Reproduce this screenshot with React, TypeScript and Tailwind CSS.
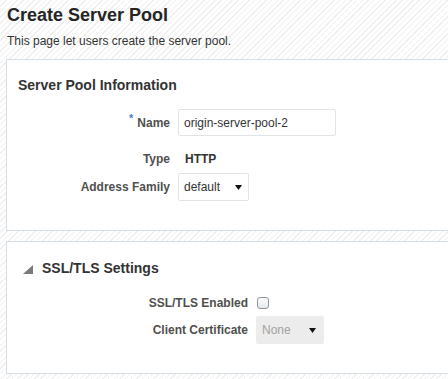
import React from "react";

function Caret() {
  return (
    <svg width="7" height="5" viewBox="0 0 7 5" className="block">
      <path d="M0 0 H7 L3.5 5 Z" fill="#111" />
    </svg>
  );
}

export default function App() {
  return (
    <div
      className="w-[448px] h-[379px] overflow-hidden text-[12px] text-[#333] bg-[repeating-linear-gradient(135deg,#efefef_0px,#efefef_1px,#ffffff_1px,#ffffff_4px)]"
      style={{ fontFamily: '"Liberation Sans", Arial, sans-serif' }}
    >
      <div className="pl-[7px] pt-[5px]">
        <h1 className="text-[18px] leading-[21px] font-bold text-[#252525]">Create Server Pool</h1>
        <p className="mt-[8px] text-[12px] leading-[14px] text-[#333]">This page let users create the server pool.</p>
      </div>

      <div className="ml-[6px] mt-[11px] w-[460px] border border-[#d6dfe6] bg-white pt-[17px] pb-[29px]">
        <h2 className="pl-[11px] text-[14px] leading-[17px] font-bold text-[#333]">Server Pool Information</h2>
        <div className="mt-[15px] grid grid-cols-[163px_auto] gap-x-[8px] items-center">
          <div className="flex justify-end items-center font-bold text-[#4f4f4f]">
            <span className="text-[#4a7ab7] text-[11px] mr-[4px] relative top-[-4px]">*</span>
            <span>Name</span>
          </div>
          <div className="w-[158px] h-[27px] border border-[#dfe4e7] rounded-[2px] flex items-center pl-[5px] text-[#333]">
            origin-server-pool-2
          </div>

          <div className="mt-[14px] h-[18px] flex justify-end items-center font-bold text-[#4f4f4f]">Type</div>
          <div className="mt-[14px] h-[18px] flex items-center pl-[7px] font-bold text-[#333]">HTTP</div>

          <div className="mt-[5px] flex justify-end items-center font-bold text-[#4f4f4f]">Address Family</div>
          <div className="mt-[5px] w-[71px] h-[28px] border border-[#dfe4e7] rounded-[2px] flex items-center justify-between pl-[5px] pr-[6px] text-[#333]">
            <span>default</span>
            <Caret />
          </div>
        </div>
      </div>

      <div className="ml-[6px] mt-[10px] w-[460px] border border-[#d6dfe6] bg-white pt-[18px] pb-[29px]">
        <div className="flex items-center">
          <svg width="10" height="9" viewBox="0 0 10 9" className="ml-[16px] mt-[1px]">
            <path d="M0 9 L10 9 L10 0 Z" fill="#7a7a7a" />
          </svg>
          <h2 className="ml-[9px] text-[14px] leading-[17px] font-bold text-[#333]">SSL/TLS Settings</h2>
        </div>
        <div className="mt-[17px] grid grid-cols-[241px_auto] gap-x-[8px] items-center">
          <div className="h-[18px] flex justify-end items-center font-bold text-[#4f4f4f]">SSL/TLS Enabled</div>
          <div className="h-[18px] flex items-center">
            <div className="w-[12px] h-[12px] ml-[1px] border border-[#8e979e] rounded-[3px] bg-[linear-gradient(#fbfbfb,#e6e9ec)]" />
          </div>

          <div className="mt-[4px] flex justify-end items-center font-bold text-[#4f4f4f]">Client Certificate</div>
          <div className="mt-[4px] w-[68px] h-[28px] bg-[#ececec] rounded-[2px] flex items-center justify-between pl-[6px] pr-[8px] text-[#a3a3a3]">
            <span>None</span>
            <Caret />
          </div>
        </div>
      </div>
    </div>
  );
}
